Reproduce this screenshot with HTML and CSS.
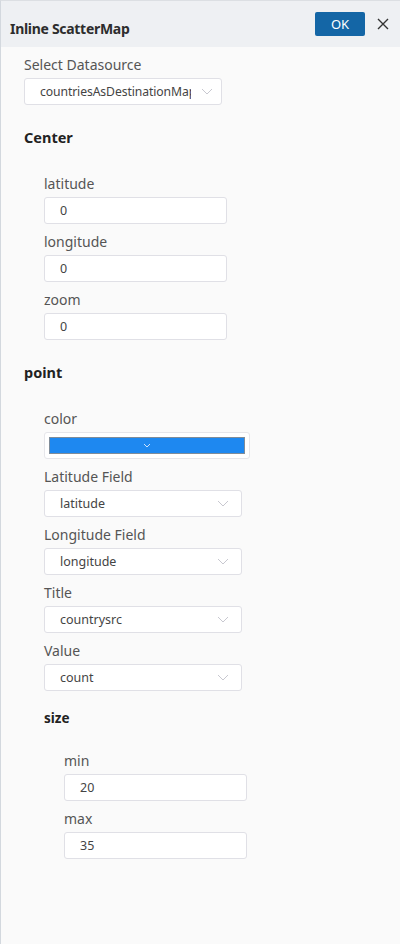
FILE: index.html
```html
<!DOCTYPE html>
<html>
<head>
<meta charset="utf-8">
<link rel="stylesheet" href="styles.css">
</head>
<body>
<div class="panel">
  <header class="head">
    <div class="title">Inline ScatterMap</div>
    <button class="ok">OK</button>
    <svg class="close" width="12" height="12" viewBox="0 0 12 12"><path d="M1 1L11 11M11 1L1 11" stroke="#333" stroke-width="1.4" fill="none"/></svg>
  </header>
  <main class="body">
    <div class="field">
      <div class="label">Select Datasource</div>
      <div class="select ds"><span class="val">countriesAsDestinationMap</span><svg class="chev" width="12" height="7" viewBox="0 0 12 7"><path d="M1 1L6 6L11 1" stroke="#c8c8d0" stroke-width="1" fill="none"/></svg></div>
    </div>

    <div class="section">
      <div class="heading">Center</div>
      <div class="group">
        <div class="field"><div class="label">latitude</div><div class="input">0</div></div>
        <div class="field"><div class="label">longitude</div><div class="input">0</div></div>
        <div class="field"><div class="label">zoom</div><div class="input">0</div></div>
      </div>
    </div>

    <div class="section">
      <div class="heading">point</div>
      <div class="group">
        <div class="field"><div class="label">color</div>
          <div class="color"><div class="swatch"><svg width="8" height="5" viewBox="0 0 8 5"><path d="M1 1L4 4L7 1" stroke="#cfe3fb" stroke-width="1" fill="none"/></svg></div></div>
        </div>
        <div class="field"><div class="label">Latitude Field</div><div class="select"><span class="val">latitude</span><svg class="chev" width="12" height="7" viewBox="0 0 12 7"><path d="M1 1L6 6L11 1" stroke="#c8c8d0" stroke-width="1" fill="none"/></svg></div></div>
        <div class="field"><div class="label">Longitude Field</div><div class="select"><span class="val">longitude</span><svg class="chev" width="12" height="7" viewBox="0 0 12 7"><path d="M1 1L6 6L11 1" stroke="#c8c8d0" stroke-width="1" fill="none"/></svg></div></div>
        <div class="field"><div class="label">Title</div><div class="select"><span class="val">countrysrc</span><svg class="chev" width="12" height="7" viewBox="0 0 12 7"><path d="M1 1L6 6L11 1" stroke="#c8c8d0" stroke-width="1" fill="none"/></svg></div></div>
        <div class="field"><div class="label">Value</div><div class="select"><span class="val">count</span><svg class="chev" width="12" height="7" viewBox="0 0 12 7"><path d="M1 1L6 6L11 1" stroke="#c8c8d0" stroke-width="1" fill="none"/></svg></div></div>

        <div class="section sub">
          <div class="heading small">size</div>
          <div class="group">
            <div class="field"><div class="label">min</div><div class="input">20</div></div>
            <div class="field"><div class="label">max</div><div class="input">35</div></div>
          </div>
        </div>
      </div>
    </div>
  </main>
</div>
</body>
</html>
```

FILE: styles.css
```css
html, body {
  margin: 0;
  padding: 0;
}
body {
  width: 400px;
  height: 944px;
  font-family: "Noto Sans", "Open Sans", sans-serif;
  color: #555;
  background: #fafafa;
}
.panel {
  box-sizing: border-box;
  height: 944px;
  border-top: 1px solid #dcdfe3;
  border-left: 1px solid #d3d8de;
  background: #fafafa;
  display: flex;
  flex-direction: column;
}
.head {
  height: 46px;
  background: #eef0f3;
  display: flex;
  align-items: center;
  padding: 0 11px 0 9px;
  flex: none;
}
.title {
  flex: 1;
  font-weight: 700;
  font-size: 14px;
  color: #2d2d2d;
  letter-spacing: -0.3px;
  padding-top: 8px;
}
.ok {
  width: 50px;
  height: 24px;
  border: none;
  border-radius: 2px;
  background: #1466a6;
  color: #fff;
  font-family: inherit;
  font-size: 13px;
  padding: 0;
  margin-right: 12px;
}
.close { display: block; }
.body {
  padding: 8px 0 0 23px;
}
.field {
  display: flex;
  flex-direction: column;
  margin-bottom: 8px;
}
.label {
  font-size: 14px;
  line-height: 20px;
  margin-bottom: 3px;
  color: #555;
}
.select, .input {
  box-sizing: border-box;
  height: 27px;
  background: #fff;
  border: 1px solid #e0e0e6;
  border-radius: 3px;
  font-size: 12.5px;
  color: #444;
  display: flex;
  align-items: center;
  padding-left: 15px;
}
.input { width: 183px; }
.select { width: 198px; padding-right: 12px; }
.select .val {
  flex: 1;
  overflow: hidden;
  white-space: nowrap;
}
.select .chev { flex: none; margin-left: 10px; }
.ds .val { flex: none; width: 151px; font-size: 12.2px; letter-spacing: -0.1px; }
.section {
  margin-top: 22px;
}
.heading {
  font-weight: 700;
  font-size: 14.5px;
  color: #222;
  line-height: 20px;
  margin-bottom: 27px;
}
.heading.small { font-size: 13.5px; margin-bottom: 23px; }
.group {
  padding-left: 20px;
}
.section.sub { margin-top: 17px; }
.color {
  box-sizing: border-box;
  width: 206px;
  height: 27px;
  background: #fff;
  border: 1px solid #e6e6ea;
  border-radius: 3px;
  padding: 4px;
  display: flex;
}
.swatch {
  flex: 1;
  background: #1e88f0;
  border: 1px solid #7f8c99;
  box-sizing: border-box;
  display: flex;
  align-items: center;
  justify-content: center;
}
.swatch svg { display: block; }
```
